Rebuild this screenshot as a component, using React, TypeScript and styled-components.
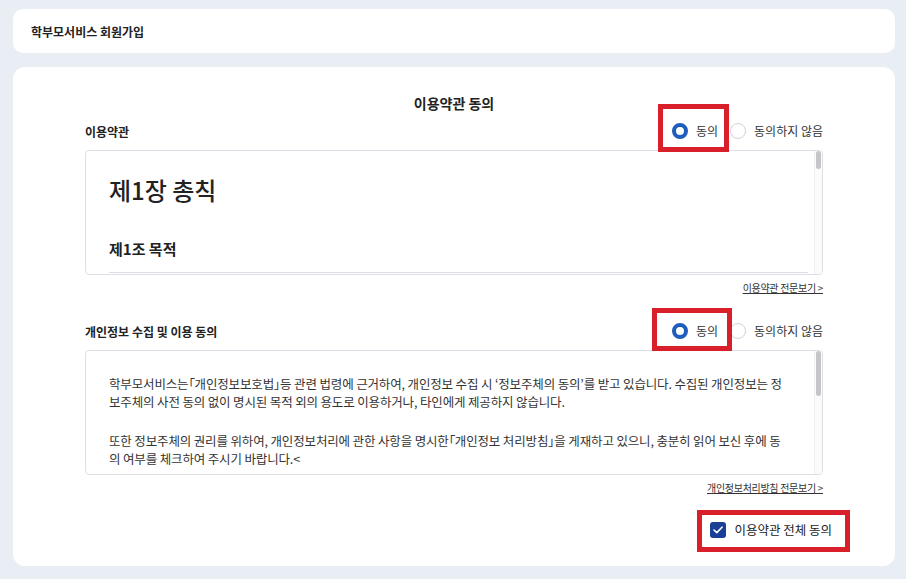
import React from "react";
import styled, { createGlobalStyle } from "styled-components";

const GlobalStyle = createGlobalStyle`
  * { box-sizing: border-box; }
  html, body { margin: 0; padding: 0; }
  body {
    background: #e9edf4;
    font-family: "Noto Sans CJK KR", "Noto Sans", sans-serif;
    color: #222;
  }
`;

const Page = styled.div`
  display: flex;
  flex-direction: column;
  gap: 14px;
  padding: 9px 11px 13px 13px;
`;

const HeaderCard = styled.header`
  height: 44px;
  background: #fff;
  border-radius: 10px;
  display: flex;
  align-items: center;
  padding-left: 18px;
  font-size: 12px;
  font-weight: 700;
  color: #222;
`;

const MainCard = styled.main`
  background: #fff;
  border-radius: 12px;
  padding: 26px 72px 26px 72px;
  display: flex;
  flex-direction: column;
`;

const Title = styled.h1`
  margin: 0;
  text-align: center;
  font-size: 14px;
  line-height: 20px;
  font-weight: 700;
  color: #222;
`;

const SectionHead = styled.div<{ $top: number }>`
  margin-top: ${(p) => p.$top}px;
  height: 24px;
  display: flex;
  align-items: center;
  justify-content: space-between;
`;

const SectionLabel = styled.h2`
  margin: 0;
  font-size: 12px;
  font-weight: 700;
  color: #222;
`;

const RadioGroup = styled.div`
  display: flex;
  align-items: center;
  gap: 12px;
`;

const Highlight = styled.span<{ $inset: string }>`
  position: relative;
  display: inline-flex;
  &::after {
    content: "";
    position: absolute;
    inset: ${(p) => p.$inset};
    border: 5px solid #d9202a;
    pointer-events: none;
  }
`;

const RadioOption = styled.label`
  display: inline-flex;
  align-items: center;
  gap: 8px;
  height: 16px;
  font-size: 12px;
  line-height: 16px;
  color: #333;
  cursor: pointer;
`;

const RadioCircle = styled.span<{ $checked?: boolean }>`
  width: 16px;
  height: 16px;
  border-radius: 50%;
  background: #fff;
  border: ${(p) => (p.$checked ? "4px solid #1f5dbd" : "1px solid #cfd3da")};
`;

const ScrollFrame = styled.div`
  margin-top: 7px;
  height: 125px;
  border: 1px solid #dcdfe5;
  border-radius: 4px;
  overflow: hidden;
  display: flex;
`;

const ScrollContent = styled.div`
  flex: 1;
  min-width: 0;
  overflow: hidden;
`;

const ScrollTrack = styled.div`
  width: 8px;
  flex: none;
  background: #fbfbfb;
  border-left: 1px solid #f0f0f2;
  padding: 0 1px 0 1px;
`;

const ScrollThumb = styled.div<{ $size: number }>`
  height: ${(p) => p.$size}px;
  border-radius: 3px;
  background: #c6c6c8;
`;

const TermsBody = styled.div`
  padding: 14px 6px 40px 23px;
`;

const ChapterTitle = styled.h3`
  margin: 0;
  font-size: 24px;
  line-height: 50px;
  font-weight: 500;
  color: #222;
`;

const ArticleTitle = styled.h4`
  margin: 23px 0 0;
  font-size: 15px;
  line-height: 22px;
  font-weight: 700;
  color: #222;
  padding-bottom: 12px;
  border-bottom: 1px solid #dcdfe5;
`;

const ArticleText = styled.p`
  margin: 16px 0 0;
  font-size: 13px;
  line-height: 20px;
  color: #333;
`;

const PolicyBody = styled.div`
  padding: 24px 28px 24px 23px;
`;

const PolicyText = styled.p<{ $top: number }>`
  margin: ${(p) => p.$top}px 0 0;
  font-size: 12.5px;
  line-height: 18px;
  letter-spacing: -0.15px;
  font-feature-settings: "palt";
  color: #333;
`;

const LinkRow = styled.div`
  margin-top: 6px;
  display: flex;
  justify-content: flex-end;
`;

const MoreLink = styled.a`
  font-size: 10px;
  line-height: 14px;
  letter-spacing: -0.3px;
  color: #333;
  text-decoration: underline;
  cursor: pointer;
`;

const AgreeRow = styled.div`
  margin-top: 25px;
  margin-right: -9px;
  display: flex;
  justify-content: flex-end;
`;

const CheckOption = styled.label`
  display: inline-flex;
  align-items: center;
  gap: 8px;
  font-size: 12.5px;
  line-height: 20px;
  color: #222;
  cursor: pointer;
`;

const CheckBox = styled.span`
  width: 16px;
  height: 16px;
  border-radius: 3px;
  background: #1b3f94;
  display: inline-flex;
  align-items: center;
  justify-content: center;
`;

function Radios({ inset }: { inset: string }) {
  return (
    <RadioGroup>
      <Highlight $inset={inset}>
        <RadioOption>
          <RadioCircle $checked />
          동의
        </RadioOption>
      </Highlight>
      <RadioOption>
        <RadioCircle />
        동의하지 않음
      </RadioOption>
    </RadioGroup>
  );
}

export default function App() {
  return (
    <>
      <GlobalStyle />
      <Page>
        <HeaderCard>학부모서비스 회원가입</HeaderCard>
        <MainCard>
          <Title>이용약관 동의</Title>

          <SectionHead $top={6}>
            <SectionLabel>이용약관</SectionLabel>
            <Radios inset="-19px -11px -13px -14px" />
          </SectionHead>
          <ScrollFrame>
            <ScrollContent>
              <TermsBody>
                <ChapterTitle>제1장 총칙</ChapterTitle>
                <ArticleTitle>제1조 목적</ArticleTitle>
                <ArticleText>
                  이 약관은 학부모서비스(이하 "서비스"라 한다)를 이용함에 있어 이용자와 서비스 제공자 간의 권리, 의무 및
                  책임사항, 기타 필요한 사항을 규정함을 목적으로 합니다.
                </ArticleText>
                <ArticleTitle>제2조 용어의 정의</ArticleTitle>
                <ArticleText>
                  ① "이용자"란 이 약관에 따라 서비스를 이용하는 학부모 회원을 말합니다.
                </ArticleText>
              </TermsBody>
            </ScrollContent>
            <ScrollTrack>
              <ScrollThumb $size={18} />
            </ScrollTrack>
          </ScrollFrame>
          <LinkRow>
            <MoreLink>이용약관 전문보기 &gt;</MoreLink>
          </LinkRow>

          <SectionHead $top={24}>
            <SectionLabel>개인정보 수집 및 이용 동의</SectionLabel>
            <Radios inset="-15px -14px -12px -20px" />
          </SectionHead>
          <ScrollFrame>
            <ScrollContent>
              <PolicyBody>
                <PolicyText $top={0}>
                  학부모서비스는「개인정보보호법」등 관련 법령에 근거하여, 개인정보 수집 시 ‘정보주체의 동의’를 받고
                  있습니다. 수집된 개인정보는 정보주체의 사전 동의 없이 명시된 목적 외의 용도로 이용하거나, 타인에게 제공하지
                  않습니다.
                </PolicyText>
                <PolicyText $top={21}>
                  또한 정보주체의 권리를 위하여, 개인정보처리에 관한 사항을 명시한「개인정보 처리방침」을 게재하고 있으니,
                  충분히 읽어 보신 후에 동의 여부를 체크하여 주시기 바랍니다.&lt;
                </PolicyText>
              </PolicyBody>
            </ScrollContent>
            <ScrollTrack>
              <ScrollThumb $size={45} />
            </ScrollTrack>
          </ScrollFrame>
          <LinkRow>
            <MoreLink>개인정보처리방침 전문보기 &gt;</MoreLink>
          </LinkRow>

          <AgreeRow>
            <Highlight $inset="-10px -18px -12px -13px">
              <CheckOption>
                <CheckBox>
                  <svg width="10" height="8" viewBox="0 0 10 8" fill="none">
                    <path d="M1 4l2.8 2.6L9 1.2" stroke="#fff" strokeWidth="1.6" strokeLinecap="round" strokeLinejoin="round" />
                  </svg>
                </CheckBox>
                이용약관 전체 동의
              </CheckOption>
            </Highlight>
          </AgreeRow>
        </MainCard>
      </Page>
    </>
  );
}
